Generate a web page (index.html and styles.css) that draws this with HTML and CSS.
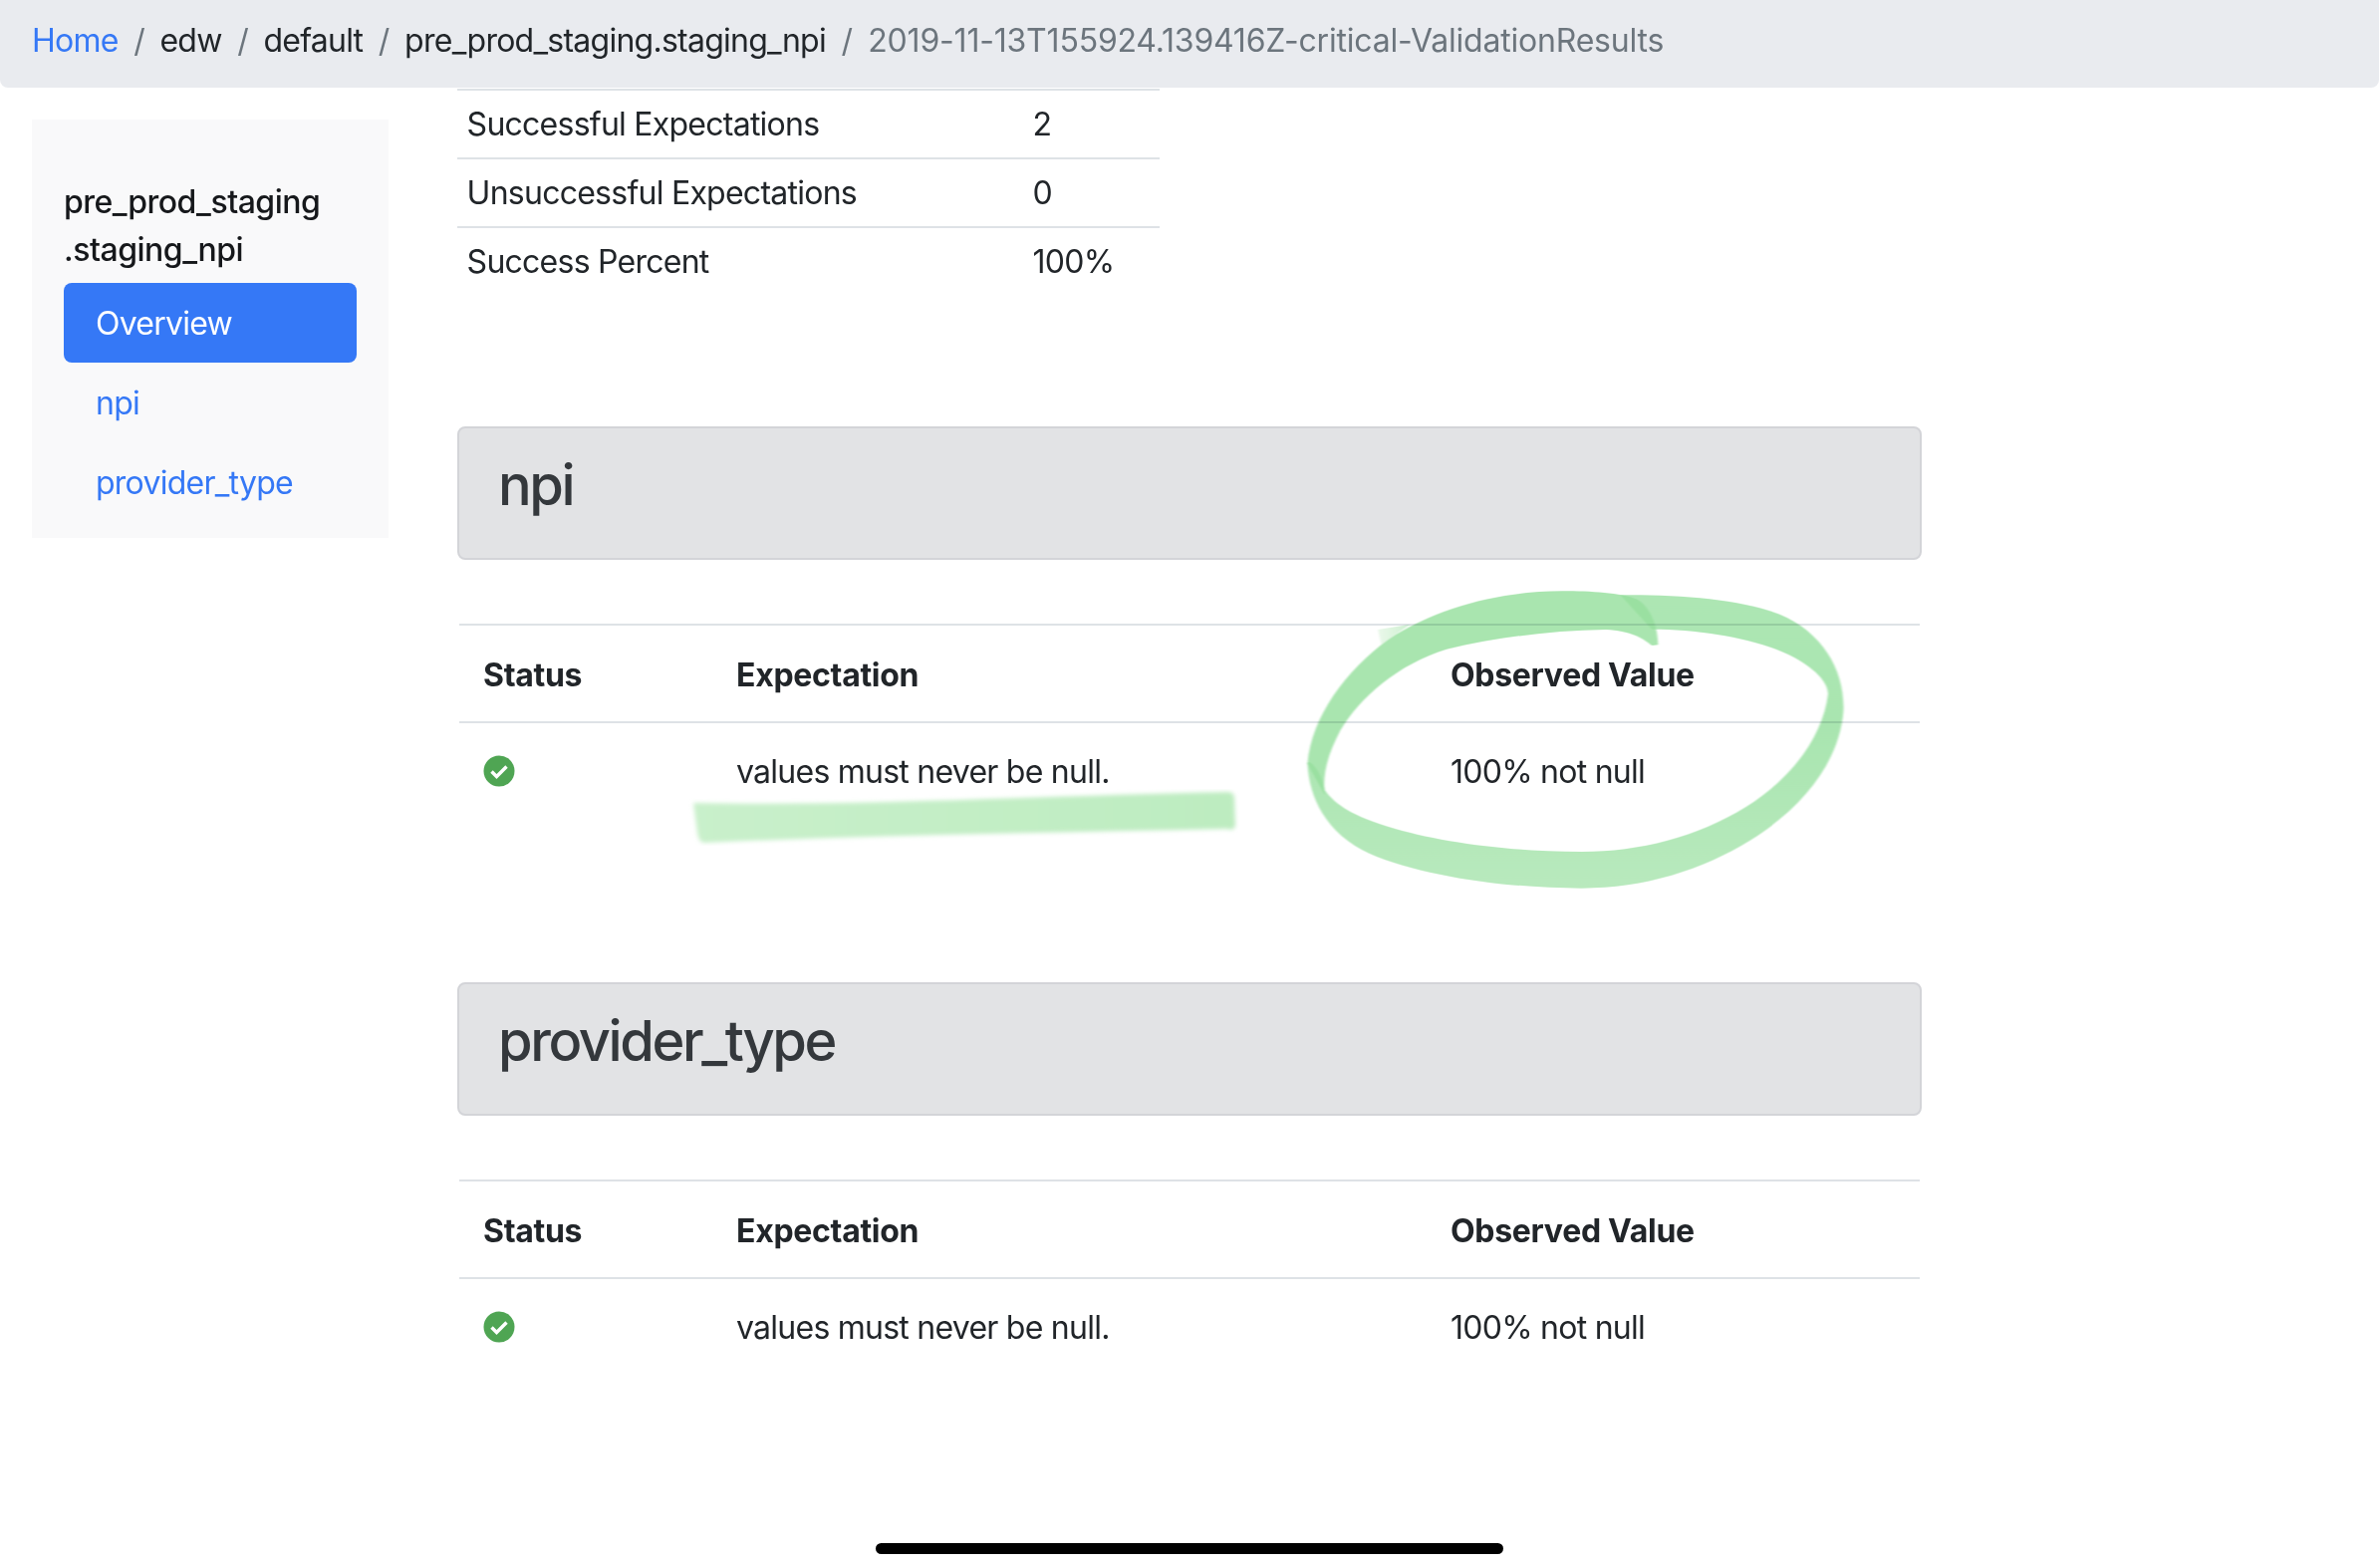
FILE: index.html
```html
<!DOCTYPE html>
<html lang="en">
<head>
<meta charset="utf-8">
<title>Validation Results</title>
<link rel="stylesheet" href="styles.css">
</head>
<body>
<nav class="breadcrumb">
  <a class="crumb crumb-link" href="#">Home</a>
  <span class="crumb">edw</span>
  <span class="crumb">default</span>
  <span class="crumb">pre_prod_staging.staging_npi</span>
  <span class="crumb crumb-active">2019-11-13T155924.139416Z-critical-ValidationResults</span>
</nav>
<div class="layout">
  <aside class="sidebar">
    <div class="sidebar-title">pre_prod_staging<br>.staging_npi</div>
    <a class="pill pill-active" href="#">Overview</a>
    <a class="pill" href="#">npi</a>
    <a class="pill" href="#">provider_type</a>
  </aside>
  <main class="content">
    <table class="stats">
      <tr><td class="stats-label">Successful Expectations</td><td>2</td></tr>
      <tr><td class="stats-label">Unsuccessful Expectations</td><td>0</td></tr>
      <tr><td class="stats-label">Success Percent</td><td>100%</td></tr>
    </table>

    <section class="section section-first">
      <div class="card"><h3 class="card-title">npi</h3></div>
      <table class="results">
        <colgroup><col class="col-status"><col class="col-expect"><col></colgroup>
        <thead><tr><th>Status</th><th>Expectation</th><th>Observed Value</th></tr></thead>
        <tbody><tr>
          <td><svg class="check" viewBox="0 0 32 32"><circle cx="16" cy="16" r="15.5" fill="#4fa553"/><path d="M8.5 16.5l5 5 10-10" fill="none" stroke="#fff" stroke-width="3.4"/></svg></td>
          <td>values must never be null.</td>
          <td>100% not null</td>
        </tr></tbody>
      </table>
    </section>

    <section class="section">
      <div class="card"><h3 class="card-title">provider_type</h3></div>
      <table class="results">
        <colgroup><col class="col-status"><col class="col-expect"><col></colgroup>
        <thead><tr><th>Status</th><th>Expectation</th><th>Observed Value</th></tr></thead>
        <tbody><tr>
          <td><svg class="check" viewBox="0 0 32 32"><circle cx="16" cy="16" r="15.5" fill="#4fa553"/><path d="M8.5 16.5l5 5 10-10" fill="none" stroke="#fff" stroke-width="3.4"/></svg></td>
          <td>values must never be null.</td>
          <td>100% not null</td>
        </tr></tbody>
      </table>
    </section>
  </main>
</div>

<svg class="ink" viewBox="0 0 2388 1574" aria-hidden="true">
  <defs>
    <filter id="soft" x="-5%" y="-5%" width="110%" height="110%"><feGaussianBlur stdDeviation="2"/></filter>
    <linearGradient id="underFill" x1="0" x2="1" y1="0" y2="0"><stop offset="0" stop-color="#c9f0cb"/><stop offset="1" stop-color="#bdecc0"/></linearGradient>
    <linearGradient id="loopFill" x1="0" x2="0" y1="0" y2="1"><stop offset="0" stop-color="#9be1a3"/><stop offset=".45" stop-color="#96df9e"/><stop offset="1" stop-color="#a9e5af"/></linearGradient>
    <linearGradient id="tailFill" x1="0" x2="1" y1="0" y2="0"><stop offset="0" stop-color="#eaf8ea"/><stop offset="1" stop-color="#cdf0d0"/></linearGradient>
  </defs>
  <path filter="url(#soft)" fill="url(#underFill)" d="M696 806C860 810 1060 798 1233 795C1237 795 1239 798 1239 801L1240 828C1240 832 1236 834 1232 832C1060 836 880 838 708 846C702 846 701 841 700 836Z"/>
  <g transform="translate(1200 560) scale(.4847 .3333)" filter="url(#soft)">
    <path fill="url(#tailFill)" d="M378 216L445 200L405 240L385 262Z"/>
    <path class="ink-loop" fill="url(#loopFill)" d="M880 112C1000 110 1130 125 1210 170C1300 225 1345 340 1342 460C1335 600 1270 740 1150 850C1050 940 930 995 800 995C650 995 470 960 360 890C270 830 235 720 232 620C232 600 262 640 268 700C290 745 330 780 400 810C500 855 650 885 800 885C920 885 1040 840 1140 750C1240 660 1300 530 1310 410C1310 380 1290 340 1240 300C1170 245 1050 215 945 215Z"/>
    <path class="ink-loop" fill="#96df9e" d="M232 620C240 480 310 340 400 245C500 150 630 100 760 100C820 100 880 105 915 125C945 150 958 215 958 262L945 264C925 240 900 220 850 216C740 218 620 240 520 275C420 320 340 420 300 520C275 590 262 650 268 715Z"/>
  </g>
</svg>
<div class="home-bar"></div>
</body>
</html>
```

FILE: styles.css
```css
* { box-sizing: border-box; }
html, body { margin: 0; height: 100%; }
body {
  position: relative;
  height: 1574px;
  overflow: hidden;
  background: #fff;
  color: #212529;
  font-family: Inter, "Noto Sans", sans-serif;
  font-size: 32px;
  line-height: 48px;
  letter-spacing: -.75px;
}
a { text-decoration: none; color: #3578f6; }

.breadcrumb {
  display: flex;
  height: 88px;
  padding: 17px 32px 0;
  background: #e9ebef;
  border-radius: 0 0 8px 8px;
}
.crumb + .crumb { padding-left: 15.5px; }
.crumb + .crumb::before { content: "/"; padding-right: 15.5px; color: #6c757d; }
.crumb-active { color: #6c757d; letter-spacing: -.2px; }

.layout { display: flex; align-items: flex-start; }

.sidebar {
  width: 358px;
  margin: 32px 0 0 32px;
  padding: 59px 32px 16px;
  background: #f9f9fa;
}
.sidebar-title { margin-bottom: 9px; color: #16181b; letter-spacing: -.5px; font-weight: 500; }
.pill { display: block; height: 80px; padding: 17px 32px 15px; border-radius: 8px; }
.pill-active { background: #3578f6; color: #fff; }

.content { width: 1470px; margin-left: 69px; }

.stats { width: 705px; margin-top: 1px; border-collapse: collapse; }
.stats td { padding: 9.6px; border-top: 2px solid #dee2e6; }
.stats-label { width: 568px; }

.section { margin-top: 164px; }
.section-first { margin-top: 131px; }
.card {
  height: 134px;
  padding: 24px 39px 0;
  background: #e2e3e5;
  border: 2px solid #d3d4d8;
  border-radius: 8px;
}
.card-title { margin: 0; font-size: 56px; line-height: 67px; font-weight: 500; letter-spacing: -2.4px; color: #34383c; }

.results {
  width: 1466px;
  margin: 64px 0 0 2px;
  border-collapse: collapse;
  table-layout: fixed;
}
.results th, .results td {
  padding: 25px 24px 23px;
  text-align: left;
  vertical-align: top;
  border-top: 2px solid #dee2e6;
}
.results th { padding: 26px 24px 22px; font-weight: 700; letter-spacing: -.3px; border-bottom: 2px solid #dee2e6; }
.results tbody td { border-top: 0; }
.col-status { width: 254px; }
.col-expect { width: 717px; }
.check { display: block; width: 32px; height: 32px; margin-top: 7px; }

.ink {
  position: absolute;
  inset: 0;
  width: 2388px;
  height: 1574px;
  mix-blend-mode: multiply;
  pointer-events: none;
}
.ink-loop { opacity: .82; }

.home-bar {
  position: absolute;
  left: 879px;
  top: 1549px;
  width: 630px;
  height: 11px;
  border-radius: 6px;
  background: #000;
}
```
